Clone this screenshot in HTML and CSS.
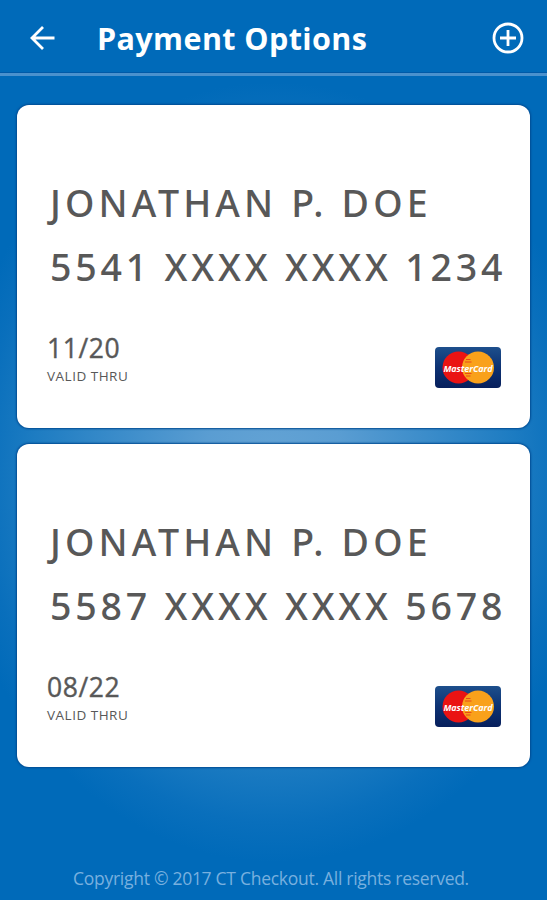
FILE: index.html
```html
<!DOCTYPE html>
<html lang="en"><head>
  <meta charset="UTF-8">
  <meta name="viewport" content="width=device-width,initial-scale=1.0">
  <title>Payment Options</title>
  <link rel="stylesheet" href="styles.css">
</head><body>
<div class="app">
  <header class="topbar">
    <svg class="back" viewBox="0 0 32 32"><path d="M28.500 16H6M17 5L6 16l11 11"/></svg>
    <h1>Payment Options</h1>
    <svg class="add" viewBox="0 0 32 32"><circle cx="16" cy="16" r="14"/><path d="M16 8v16M8 16h16"/></svg>
  </header>
  <main class="cards">
    <section class="card">
      <div class="holder">JONATHAN P. DOE</div>
      <div class="number">5541 XXXX XXXX 1234</div>
      <div class="bottom">
        <div>
          <div class="date">11/20</div>
          <div class="valid">VALID THRU</div>
        </div>
        <svg class="brand" viewBox="0 0 66 41">
          <defs>
            <linearGradient id="navy" x1="0" y1="0" x2="0" y2="1">
              <stop offset="0" stop-color="#1d4f8c"/>
              <stop offset=".5" stop-color="#0d3273"/>
              <stop offset="1" stop-color="#071f5c"/>
            </linearGradient>
          </defs>
          <rect width="66" height="41" rx="4" fill="url(#navy)"/>
          <circle cx="23.500" cy="20.500" r="16" fill="#ea1313"/>
          <circle cx="43" cy="20.500" r="16" fill="#f9a11b"/>
          <path d="M31 12.500h4.500M30 15h6.500M30 26.500h6.500M31 29h4.500" stroke="#ea4a17" stroke-width="1.200" fill="none"/>
          <text x="8.500" y="24.500">MasterCard</text>
        </svg>
      </div>
    </section>
    <section class="card">
      <div class="holder">JONATHAN P. DOE</div>
      <div class="number">5587 XXXX XXXX 5678</div>
      <div class="bottom">
        <div>
          <div class="date">08/22</div>
          <div class="valid">VALID THRU</div>
        </div>
        <svg class="brand" viewBox="0 0 66 41">
          <rect width="66" height="41" rx="4" fill="url(#navy)"/>
          <circle cx="23.500" cy="20.500" r="16" fill="#ea1313"/>
          <circle cx="43" cy="20.500" r="16" fill="#f9a11b"/>
          <path d="M31 12.500h4.500M30 15h6.500M30 26.500h6.500M31 29h4.500" stroke="#ea4a17" stroke-width="1.200" fill="none"/>
          <text x="8.500" y="24.500">MasterCard</text>
        </svg>
      </div>
    </section>
  </main>
  <footer>Copyright © 2017 CT Checkout. All rights reserved.</footer>
</div>
</body>
</html>
```

FILE: styles.css
```css
html,body{
  height:100%;
  margin:0;
}
*{
  box-sizing:border-box;
}
.app{
  display:flex;
  flex-direction:column;
  height:100%;
  overflow:hidden;
  font-family:"Open Sans","Noto Sans",sans-serif;
  background:radial-gradient(ellipse 325px 390px at 50% 472px,#65a4d5 0%,#5a9dd2 22%,#1d7cc2 74%,#096fbc 90%,#006ab9 100%) #006ab9;
}
.topbar{
  display:flex;
  align-items:center;
  flex:none;
  height:76px;
  padding:3px 23px 0 26px;
  background:#006ab9;
  border-bottom:3px solid #4a91cd;
  box-shadow:inset 0 -1px 0 #005aa8;
}
.topbar svg{
  fill:none;
  stroke:#fff;
  stroke-width:2.8;
}
.back{
  width:32px;
  height:32px;
}
h1{
  flex:1;
  margin:0 0 0 39px;
  color:#fff;
  font-size:30.5px;
  line-height:40px;
  font-weight:700;
  letter-spacing:.4px;
  white-space:nowrap;
}
.add{
  width:32px;
  height:32px;
}
.cards{
  display:flex;
  flex-direction:column;
  gap:16px;
  padding:29px 17px 0;
}
.card{
  height:323px;
  padding:73px 29px 0 30px;
  background:#fff;
  border-radius:12px;
  box-shadow:0 0 2px 1px #004b92;
  color:#585858;
}
.holder,.number{
  margin-left:3px;
  font-family:"Noto Sans","Open Sans",sans-serif;
  font-size:37.5px;
  line-height:50px;
  font-weight:500;
  letter-spacing:4.150px;
  white-space:nowrap;
}
.number{
  margin-top:14px;
  letter-spacing:3.8px;
}
.bottom{
  display:flex;
  justify-content:space-between;
  align-items:flex-start;
  margin-top:35px;
}
.date{
  margin-top:3px;
  font-size:26.5px;
  line-height:37px;
  letter-spacing:.6px;
  -webkit-text-stroke:.4px #585858;
}
.valid{
  font-size:13.5px;
  line-height:18px;
  letter-spacing:.5px;
}
.brand{
  width:66px;
  height:41px;
  margin-top:20px;
}
.brand text{
  fill:#fff;
  font-size:9px;
  font-weight:700;
  font-style:italic;
  letter-spacing:-.1px;
}
footer{
  margin-top:auto;
  height:34px;
  padding-right:5px;
  text-align:center;
  color:#78b0df;
  font-size:17.5px;
  line-height:24px;
  letter-spacing:-.28px;
  white-space:nowrap;
}
```
